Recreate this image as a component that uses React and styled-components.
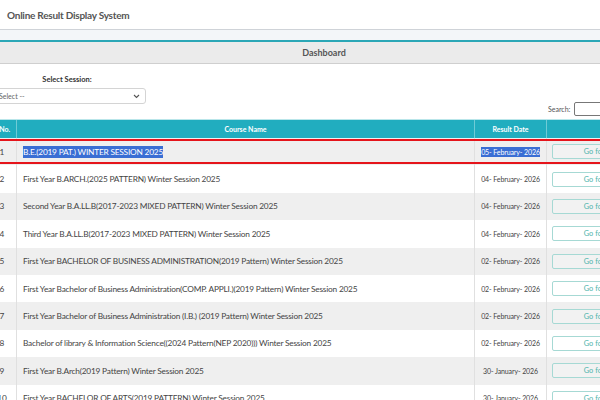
import React from "react";
import styled, { createGlobalStyle } from "styled-components";

const GlobalStyle = createGlobalStyle`
  html, body {
    margin: 0;
    padding: 0;
    background: #ffffff;
    overflow: hidden;
  }
  body {
    font-family: Lato, "Liberation Sans", sans-serif;
    color: #444;
  }
`;

const Page = styled.div`
  width: 672px;
  margin-left: -12px;
`;

const TopBar = styled.div`
  height: 29px;
  display: flex;
  align-items: center;
  padding-left: 19px;
  border-bottom: 1px solid #cfd3d8;
`;

const Title = styled.div`
  font-size: 10px;
  font-weight: 700;
  letter-spacing: -0.25px;
  color: #555;
`;

const Strip = styled.div`
  height: 10px;
  background: #f3f6f9;
  border-bottom: 2px solid #2ba7b6;
`;

const PanelHead = styled.div`
  height: 21px;
  display: flex;
  align-items: center;
  justify-content: center;
  background: #ebebeb;
  border-bottom: 1px solid #cfcfcf;
  font-size: 9px;
  font-weight: 700;
  color: #555;
`;

const Filters = styled.div`
  display: flex;
  justify-content: space-between;
  align-items: flex-end;
  padding-top: 11px;
  height: 55px;
  box-sizing: border-box;
`;

const SessionBox = styled.div`
  width: 158px;
  display: flex;
  flex-direction: column;
  align-items: center;
  gap: 4px;
  align-self: flex-start;
`;

const Label = styled.div`
  font-size: 7.5px;
  font-weight: 700;
  color: #333;
`;

const SelectBox = styled.div`
  width: 100%;
  height: 16px;
  box-sizing: border-box;
  border: 1px solid #d4d4d4;
  border-radius: 3px;
  display: flex;
  align-items: center;
  justify-content: space-between;
  padding: 0 5px 0 3px;
  font-size: 7px;
  color: #666;
`;

const SearchBox = styled.div`
  display: flex;
  align-items: center;
  gap: 4px;
  width: 112px;
  margin-bottom: 3px;
`;

const SearchLabel = styled.span`
  font-size: 7px;
  color: #555;
`;

const SearchInput = styled.div`
  flex: 1;
  height: 14px;
  box-sizing: border-box;
  border: 1px solid #777;
  border-radius: 2px;
`;

const cols = "28px 458px 72px 114px";

const HeadRow = styled.div`
  display: grid;
  grid-template-columns: ${cols};
  height: 18px;
  background: #21adbf;
  border-top: 1px solid #b9e6ea;
`;

const HeadCell = styled.div`
  display: flex;
  align-items: center;
  justify-content: center;
  font-size: 7px;
  font-weight: 700;
  color: #ffffff;
  border-left: ${(p) => (p.$first ? "none" : "1px solid #6fcbd6")};
`;

const Row = styled.div`
  display: grid;
  grid-template-columns: ${cols};
  height: 27.4px;
  background: ${(p) => (p.$odd ? "#efefef" : "#ffffff")};
  outline: ${(p) => (p.$marked ? "2.5px solid #e5141b" : "none")};
  outline-offset: -3px;
`;

const Cell = styled.div`
  display: flex;
  align-items: center;
  justify-content: ${(p) => (p.$center ? "center" : "flex-start")};
  padding: ${(p) => (p.$pad ? "0 6px" : "0")};
  font-size: 8.3px;
  letter-spacing: ${(p) => (p.$pad ? "-0.2px" : "0")};
  color: #444;
  white-space: nowrap;
  overflow: hidden;
  border-left: ${(p) => (p.$first ? "none" : "1px solid #e0e0e0")};
`;

const DateCell = styled(Cell)`
  font-size: 7px;
  letter-spacing: -0.1px;
  background: ${(p) => (p.$odd ? "#efefef" : "#ffffff")};
`;

const Picked = styled.span`
  background: #3a6ed4;
  color: #ffffff;
  padding: 1px 0;
`;

const GoButton = styled.div`
  width: 106px;
  height: 15px;
  margin-left: 5px;
  box-sizing: border-box;
  border: 1px solid #a6d9d4;
  border-radius: 2px;
  background: ${(p) => (p.$odd ? "#f2f2f2" : "#ffffff")};
  display: flex;
  align-items: center;
  justify-content: center;
  font-size: 7.4px;
  color: #4fb5ab;
`;

const results = [
  ["B.E.(2019 PAT.) WINTER SESSION 2025", "05- February- 2026"],
  ["First Year B.ARCH.(2025 PATTERN) Winter Session 2025", "04- February- 2026"],
  ["Second Year B.A.LL.B(2017-2023 MIXED PATTERN) Winter Session 2025", "04- February- 2026"],
  ["Third Year B.A.LL.B(2017-2023 MIXED PATTERN) Winter Session 2025", "04- February- 2026"],
  ["First Year BACHELOR OF BUSINESS ADMINISTRATION(2019 Pattern) Winter Session 2025", "02- February- 2026"],
  ["First Year Bachelor of Business Administration(COMP. APPLI.)(2019 Pattern) Winter Session 2025", "02- February- 2026"],
  ["First Year Bachelor of Business Administration (I.B.) (2019 Pattern) Winter Session 2025", "02- February- 2026"],
  ["Bachelor of library & Information Science((2024 Pattern(NEP 2020))) Winter Session 2025", "02- February- 2026"],
  ["First Year B.Arch(2019 Pattern) Winter Session 2025", "30- January- 2026"],
  ["First Year BACHELOR OF ARTS(2019 PATTERN) Winter Session 2025", "30- January- 2026"],
];

const Chevron = () => (
  <svg width="7" height="5" viewBox="0 0 7 5">
    <path d="M1 1 L3.5 3.5 L6 1" fill="none" stroke="#555" strokeWidth="1.1" />
  </svg>
);

const App = () => {
  return (
    <Page>
      <GlobalStyle />
      <TopBar>
        <Title>Online Result Display System</Title>
      </TopBar>
      <Strip />
      <PanelHead>Dashboard</PanelHead>
      <Filters>
        <SessionBox>
          <Label>Select Session:</Label>
          <SelectBox>
            <span>-- Select --</span>
            <Chevron />
          </SelectBox>
        </SessionBox>
        <SearchBox>
          <SearchLabel>Search:</SearchLabel>
          <SearchInput />
        </SearchBox>
      </Filters>
      <HeadRow>
        <HeadCell $first>S.No.</HeadCell>
        <HeadCell>Course Name</HeadCell>
        <HeadCell>Result Date</HeadCell>
        <HeadCell />
      </HeadRow>
      {results.map(([name, date], i) => {
        const odd = i % 2 === 0;
        const marked = i === 0;
        return (
          <Row key={i} $odd={odd} $marked={marked}>
            <Cell $first $center>{i + 1}</Cell>
            <Cell $pad>{marked ? <Picked>{name}</Picked> : name}</Cell>
            <DateCell $center $odd={odd}>
              {marked ? <Picked>{date}</Picked> : date}
            </DateCell>
            <Cell>
              <GoButton $odd={odd}>Go for Result</GoButton>
            </Cell>
          </Row>
        );
      })}
    </Page>
  );
};

export default App;
